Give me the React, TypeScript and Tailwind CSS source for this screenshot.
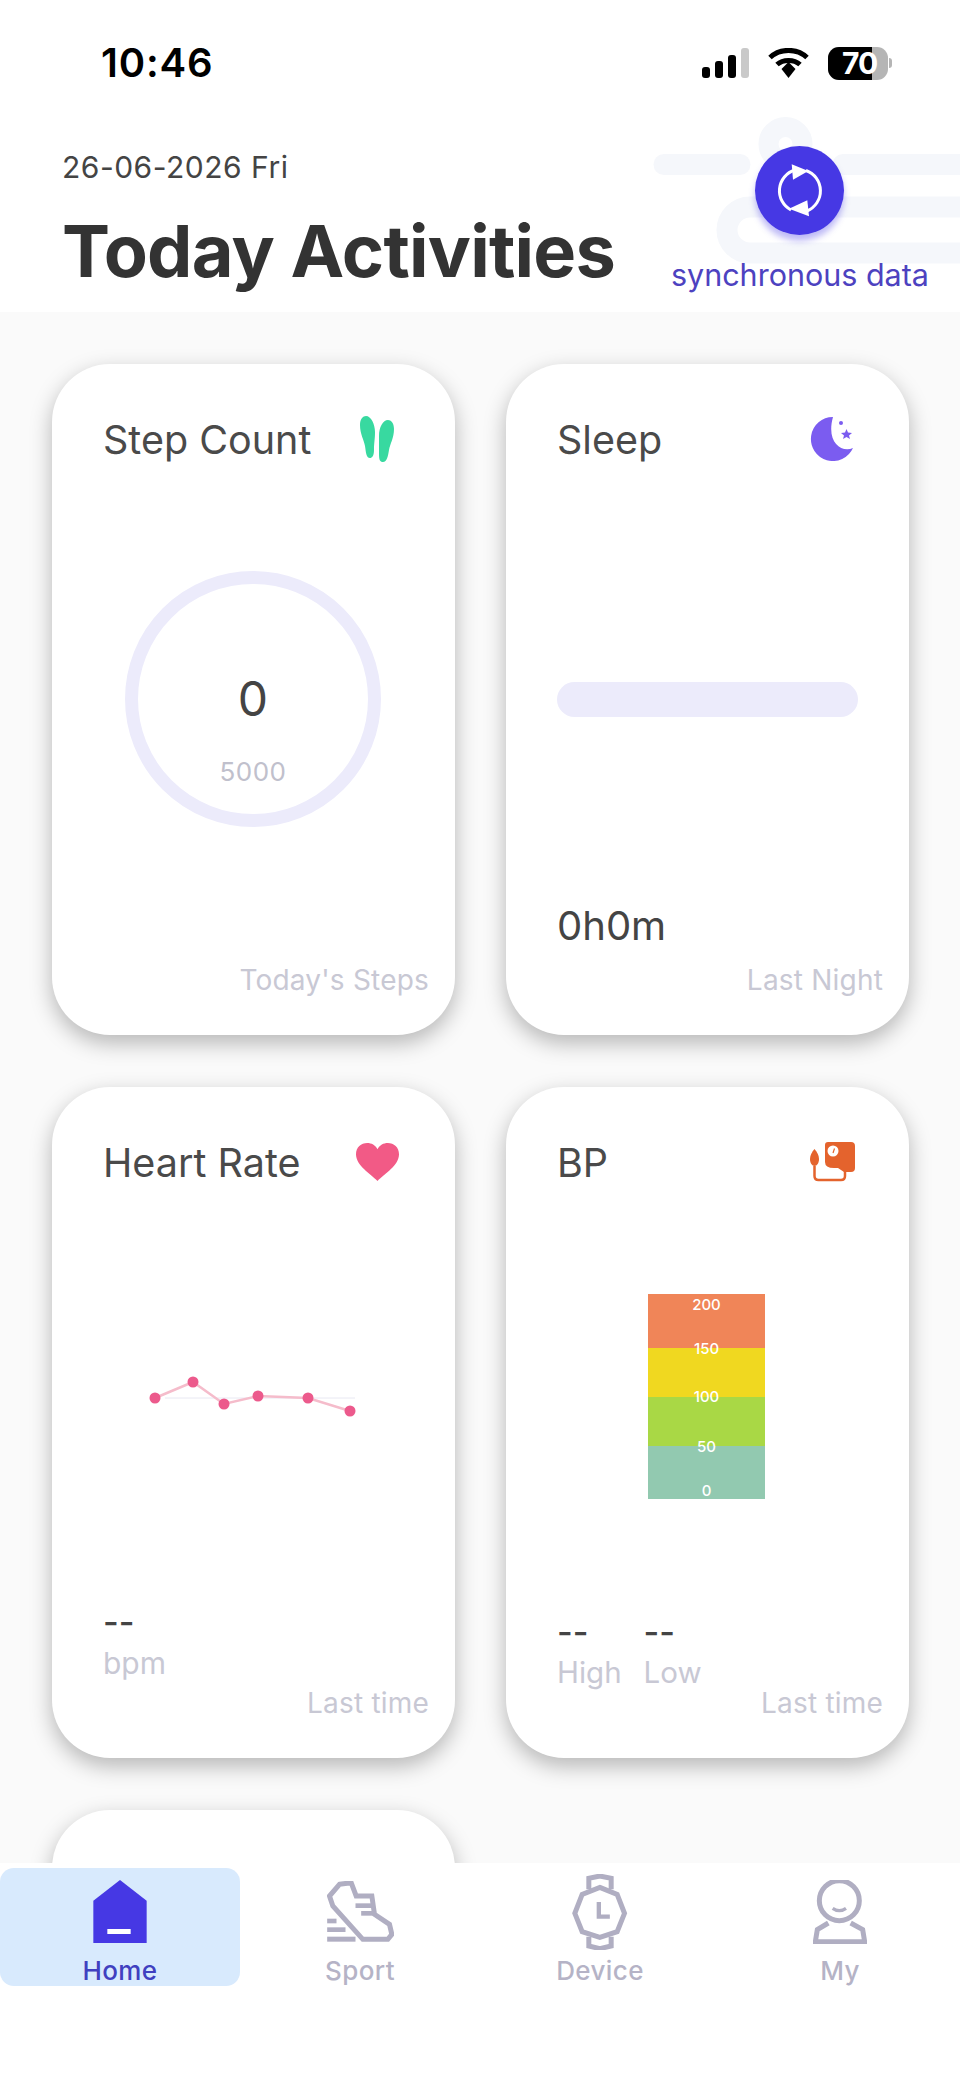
import React from 'react';

function Signal() {
  return (
    <svg width="47" height="30" viewBox="0 0 47 30" className="block">
      <rect x="0" y="19" width="8" height="11" rx="3" fill="#000" />
      <rect x="13" y="13" width="8" height="17" rx="3" fill="#000" />
      <rect x="26" y="7" width="8" height="23" rx="3" fill="#000" />
      <rect x="39" y="0" width="8" height="30" rx="3" fill="#c9c9c9" />
    </svg>
  );
}

function Wifi() {
  return (
    <svg width="41" height="30" viewBox="0 0 41 30" className="block" fill="none" stroke="#000" strokeWidth="5">
      <path d="M2 9.5 C12 0 29 0 39 9.5" />
      <path d="M9 16.5 C15 11 26 11 32 16.5" />
      <path d="M13.5 21 L20.5 14 L27.5 21 L20.5 30 Z" fill="#000" stroke="none" />
    </svg>
  );
}

function Battery() {
  return (
    <div className="flex items-center gap-[1px]">
      <div className="relative w-[60px] h-[33px] rounded-[11px] overflow-hidden bg-[#b5b5b5] flex">
        <div className="w-[44px] h-full bg-black" />
        <span className="absolute left-[14px] top-0 h-full flex items-center text-[30px] font-bold text-white leading-none tracking-[-1px]">70</span>
      </div>
      <div className="w-[3px] h-[10px] rounded-r-full bg-[#b5b5b5]" />
    </div>
  );
}

function SyncIcon() {
  return (
    <svg width="60" height="60" viewBox="0 0 60 60" fill="none">
      <path d="M25 9 A21.7 21.7 0 0 0 21 49" stroke="#fff" strokeWidth="3" />
      <path d="M36 9.5 A21.7 21.7 0 0 1 37 50" stroke="#fff" strokeWidth="3" />
      <path d="M38.3 10 L21.7 3.3 L23 18.7 Z" fill="#fff" />
      <path d="M19 47.7 L39 55.3 L37.3 39.3 Z" fill="#fff" />
    </svg>
  );
}

function Feet() {
  return (
    <svg width="34" height="46" viewBox="0 0 34 46" fill="#38d9a0" className="mr-[2px]">
      <path d="M6 0 C11 0 15 8 15 16 C15 24 14 26 14 34 C14 40 12 42 10 42 C6 42 6 36 5 30 C4 24 0 18 0 9 C0 3 3 0 6 0Z" />
      <path d="M28 4 C23 4 19 11 19 20 C19 28 19 30 19 38 C19 44 20 46 23 46 C27 46 28 40 29 34 C30 28 34 22 34 13 C34 7 31 4 28 4Z" />
    </svg>
  );
}

function Moon() {
  return (
    <svg width="44" height="44" viewBox="0 0 44 44" fill="#7b5cf0" className="-mr-[3px]">
      <path d="M24 0 A22 22 0 1 0 44 31 C32 36 17 25 24 0Z" />
      <circle cx="32" cy="6" r="2" />
      <path d="M37.5 12 L39 15.5 L43 16 L40 18.500 L41 22 L37.500 20 L34 22 L35 18.500 L32 16 L36 15.500 Z" />
    </svg>
  );
}

function Heart() {
  return (
    <svg width="43" height="38" viewBox="0 0 42 37" fill="#f25a86" className="-mr-[3px]">
      <path d="M21 37 C14 30 0 22 0 11 C0 4 5 0 11 0 C15 0 19 2 21 6 C23 2 27 0 31 0 C37 0 42 4 42 11 C42 22 28 30 21 37Z" />
    </svg>
  );
}

function BpIcon() {
  return (
    <svg width="45" height="40" viewBox="0 0 45 40" fill="none" className="-mr-[5px]">
      <path d="M18 0 H41 a4 4 0 0 1 4 4 V26 a4 4 0 0 1 -4 4 H34 L28 26 H24 Q15 26 15 20 V3 a3 3 0 0 1 3 -3Z" fill="#e4632d" />
      <circle cx="23" cy="9" r="5.500" fill="#fff" />
      <path d="M23 11 L24.500 6.500" stroke="#e4632d" strokeWidth="1.200" />
      <path d="M4.500 7 C7 10 9 13 9 17 C9 21 7 24 4.500 24 C2 24 0 21 0 17 C0 13 2 10 4.500 7Z" fill="#e4632d" />
      <path d="M4.500 24 V34 Q4.500 38 8.500 38 H31 Q35 38 35 34 V29" stroke="#e4632d" strokeWidth="2.500" />
    </svg>
  );
}

function HomeIcon() {
  return (
    <svg width="54" height="63" viewBox="0 0 160 189">
      <path d="M80 0 L160 62 V189 H0 V62 Z" fill="#4638e4" />
      <rect x="42" y="147" width="70" height="15" fill="#fff" />
    </svg>
  );
}

function SportIcon() {
  return (
    <svg width="67" height="61" viewBox="0 0 200 183" fill="none" stroke="#b0aec2" strokeWidth="15">
      <path d="M37 10 L72 5 L87 45 L134 45 L142 100 L187 130 L194 160 L182 175 L107 175 L17 75 L7 45 Z" />
      <g fill="#b0aec2" stroke="none">
        <rect x="85" y="67" width="47" height="14" />
        <rect x="102" y="90" width="35" height="14" />
        <rect x="0" y="113" width="28" height="14" />
        <rect x="0" y="139" width="55" height="14" />
        <rect x="0" y="167" width="85" height="15" />
      </g>
    </svg>
  );
}

function DeviceIcon() {
  return (
    <svg width="56" height="76" viewBox="0 0 167 228" fill="none" stroke="#b0aec2" strokeWidth="15">
      <path d="M83 40 L135 61 L157 118 L135 173 L83 190 L30 173 L8 118 L30 61 Z" />
      <path d="M50 46 V13 L83 6 L117 13 V46" />
      <path d="M50 188 V216 L83 224 L117 216 V188" />
      <path d="M80 84 V128 H113" strokeWidth="13" />
    </svg>
  );
}

function MyIcon() {
  return (
    <svg width="54" height="64" viewBox="0 0 160 192" fill="none" stroke="#b0aec2" strokeWidth="15">
      <circle cx="78" cy="62" r="60" />
      <path d="M45 129 L12 149 L6 185 H154 L148 149 L112 129" />
      <path d="M58 85 Q78 99 98 85" strokeWidth="10" />
    </svg>
  );
}

function Card({ title, icon, footer, children }: { title: string; icon?: React.ReactNode; footer?: string; children?: React.ReactNode }) {
  return (
    <div className="h-[671px] rounded-[58px] bg-white shadow-[0_8px_22px_rgba(0,0,0,0.28)] flex flex-col">
      <div className="mt-[52px] h-[46px] pl-[51px] pr-[59px] flex items-center justify-between shrink-0">
        <span className="pt-[2px] text-[39.5px] leading-[46px] text-[#4a4a4a]">{title}</span>
        {icon}
      </div>
      <div className="flex-1 flex flex-col min-h-0">{children}</div>
      <div className="h-[34px] mb-[38px] pr-[26px] text-right text-[28px] leading-[34px] tracking-[0.2px] text-[#c8c8d4] shrink-0">{footer}</div>
    </div>
  );
}

function HeartChart() {
  const points = [[103, 28], [141, 12], [172, 34], [206, 26], [256, 28], [298, 41]];
  return (
    <svg viewBox="0 0 403 50" className="w-full h-[50px] mt-[185px] block">
      <line x1="113" y1="28" x2="303" y2="28" stroke="#e8e8f2" strokeWidth="1" />
      <polyline points={points.map((p) => p.join(',')).join(' ')} fill="none" stroke="#f5bccb" strokeWidth="2.500" />
      {points.map((p) => (
        <circle key={p[0]} cx={p[0]} cy={p[1]} r="5.500" fill="#ec5a8c" />
      ))}
    </svg>
  );
}

function BpScale() {
  return (
    <div className="relative w-[117px] h-[205px] ml-[142px] mt-[109px] flex flex-col text-white font-medium">
      <div className="h-[54px] bg-[#f08558]" />
      <div className="h-[49px] bg-[#f0d820]" />
      <div className="h-[49px] bg-[#a9d845]" />
      <div className="h-[53px] bg-[#92c9b0]" />
      <span className="absolute inset-x-0 top-[2px] text-center text-[15px] leading-[18px]">200</span>
      <span className="absolute inset-x-0 top-[46px] text-center text-[15px] leading-[18px]">150</span>
      <span className="absolute inset-x-0 top-[94px] text-center text-[15px] leading-[18px]">100</span>
      <span className="absolute inset-x-0 top-[144px] text-center text-[15px] leading-[18px]">50</span>
      <span className="absolute inset-x-0 top-[188px] text-center text-[15px] leading-[18px]">0</span>
    </div>
  );
}

const navItems = [
  { label: 'Home', icon: <HomeIcon />, active: true },
  { label: 'Sport', icon: <SportIcon />, active: false },
  { label: 'Device', icon: <DeviceIcon />, active: false },
  { label: 'My', icon: <MyIcon />, active: false },
];

export default function App() {
  return (
    <div className="w-[960px] h-[2078px] overflow-hidden flex flex-col bg-white font-['Inter',sans-serif]">
      {/* Header */}
      <div className="relative h-[312px] shrink-0 bg-white">
        <svg className="absolute inset-0 w-[960px] h-[312px]" viewBox="0 0 960 312" fill="none" stroke="#f5f7fb" strokeWidth="21" strokeLinecap="round">
          <path d="M664 164.500 H740" />
          <path d="M843 164.500 H980" />
          <path d="M980 207 H750 A23 23 0 0 0 750 253 H980" />
          <circle cx="785.500" cy="144" r="17" strokeWidth="20" />
        </svg>

        <div className="relative h-[100px] pt-[26px] pl-[101px] pr-[68px] flex items-center justify-between">
          <span className="text-[40px] font-semibold text-black leading-none tracking-[0.8px]">10:46</span>
          <div className="flex items-center">
            <Signal />
            <div className="ml-[19px] mr-[19px]">
              <Wifi />
            </div>
            <Battery />
          </div>
        </div>

        <div className="relative flex items-start justify-between pl-[62px] pr-[31px]">
          <div className="pt-[49px]">
            <div className="text-[30px] leading-[36px] text-[#444] tracking-[0.5px]">26-06-2026 Fri</div>
            <div className="mt-[26px] text-[72px] leading-[80px] font-bold text-[#333] tracking-[-0.75px]">Today Activities</div>
          </div>
          <div className="pt-[46px] flex flex-col items-center">
            <div className="w-[89px] h-[89px] rounded-full bg-[#4638e4] shadow-[0_6px_6px_rgba(70,56,228,0.35)] flex items-center justify-center">
              <SyncIcon />
            </div>
            <div className="mt-[23px] text-[30.500px] leading-[34px] text-[#4d42c0] whitespace-nowrap">synchronous data</div>
          </div>
        </div>
      </div>

      {/* Cards */}
      <div className="flex-1 min-h-0 overflow-hidden bg-[#fafafa] pt-[52px] pl-[52px] pr-[51px]">
        <div className="grid grid-cols-2 gap-x-[51px] gap-y-[52px]">
          <Card title="Step Count" icon={<Feet />} footer="Today's Steps">
            <div className="mt-[109px] ml-[73px] w-[256px] h-[256px] rounded-full border-[13px] border-[#ecebfb] flex flex-col items-center">
              <div className="mt-[86px] text-[48px] leading-[58px] text-[#444]">0</div>
              <div className="mt-[28px] text-[26px] leading-[32px] text-[#c0c0cc] tracking-[0.5px]">5000</div>
            </div>
          </Card>

          <Card title="Sleep" icon={<Moon />} footer="Last Night">
            <div className="mt-[220px] ml-[51px] w-[301px] h-[35px] rounded-full bg-[#ecebfb]" />
            <div className="mt-auto mb-[13px] pl-[51px] text-[40px] leading-[48px] text-[#444]">0h0m</div>
          </Card>

          <Card title="Heart Rate" icon={<Heart />} footer="Last time">
            <HeartChart />
            <div className="mt-auto mb-[6px] pl-[51px]">
              <div className="text-[34px] leading-[40px] font-medium text-[#444]">--</div>
              <div className="mt-[4px] text-[30px] leading-[34px] text-[#c8c8d4]">bpm</div>
            </div>
          </Card>

          <Card title="BP" icon={<BpIcon />} footer="Last time">
            <BpScale />
            <div className="mt-auto mb-[-3px] pl-[51px] flex gap-[22px]">
              <div>
                <div className="text-[34px] leading-[40px] font-medium text-[#444]">--</div>
                <div className="mt-[3px] text-[29.500px] leading-[34px] text-[#c8c8d4]">High</div>
              </div>
              <div>
                <div className="text-[34px] leading-[40px] font-medium text-[#444]">--</div>
                <div className="mt-[3px] text-[29.500px] leading-[34px] text-[#c8c8d4]">Low</div>
              </div>
            </div>
          </Card>

          <Card title="" />
        </div>
      </div>

      {/* Bottom nav */}
      <div className="relative h-[215px] shrink-0 bg-white grid grid-cols-4 items-start pt-[5px]">
        {navItems.map((item) => (
          <div key={item.label} className={`h-[118px] flex flex-col items-center ${item.active ? 'bg-[#d8eafd] rounded-[14px]' : ''}`}>
            <div className="h-[88px] flex items-center justify-center">{item.icon}</div>
            <div className={`mt-[1px] text-[26px] leading-[30px] tracking-[0.4px] font-medium ${item.active ? 'text-[#4040c0]' : 'text-[#b5b3c6]'}`}>{item.label}</div>
          </div>
        ))}
      </div>
    </div>
  );
}
